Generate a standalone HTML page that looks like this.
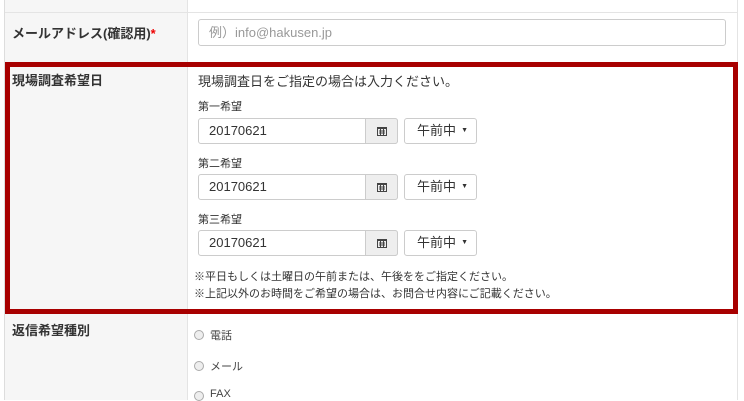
<!DOCTYPE html>
<html><head><meta charset="utf-8"><style>
*{box-sizing:border-box;margin:0;padding:0}
body{width:744px;height:400px;overflow:hidden;background:#fff;font-family:"Liberation Sans","Noto Sans CJK JP",sans-serif;color:#333;position:relative}
.a{position:absolute}
.lab{font-weight:bold;font-size:13px;color:#333}
.inp{position:absolute;border:1px solid #ccc;border-radius:3px;background:#fff;font-size:13px;padding-left:10px;line-height:24px}
.add{position:absolute;background:#eee;border:1px solid #ccc;border-radius:0 3px 3px 0}
.add svg{position:absolute;left:11px;top:7px}
.sel{position:absolute;border:1px solid #ccc;border-radius:3px;background:#fff;font-size:13px;line-height:24px;padding-left:12px}
.sm{font-size:11px;color:#333}
.rad{position:absolute;width:10px;height:10px;border:1px solid #aaa;border-radius:50%;background:#eee}
</style></head><body>
<div class="a" style="left:4px;top:0;width:1px;height:400px;background:#ddd"></div>
<div class="a" style="left:5px;top:0;width:182px;height:400px;background:#f6f6f6"></div>
<div class="a" style="left:187px;top:0;width:1px;height:400px;background:#e4e4e4"></div>
<div class="a" style="left:737px;top:0;width:1px;height:400px;background:#e4e4e4"></div>
<div class="a" style="left:5px;top:12px;width:733px;height:1px;background:#e4e4e4"></div>
<div class="a lab" style="left:12px;top:23px">メールアドレス(確認用)<span style="color:#e00">*</span></div>
<div class="inp" style="left:198px;top:19px;width:528px;height:27px;color:#999;line-height:25px">例）info@hakusen.jp</div>
<div class="a" style="left:5px;top:62px;width:733px;height:252px;border:5px solid #a80000"></div>
<div class="a lab" style="left:12px;top:70px">現場調査希望日</div>
<div class="a" style="left:198px;top:71px;font-size:13px">現場調査日をご指定の場合は入力ください。</div>

<div class="a sm" style="left:198px;top:98px">第一希望</div>
<div class="inp" style="left:198px;top:118px;width:200px;height:26px">20170621</div>
<div class="add" style="left:365px;top:118px;width:33px;height:26px"><svg width="10" height="10" viewBox="0 0 10 10"><rect x="0.5" y="1.5" width="9" height="8" fill="none" stroke="#444"/><rect x="0" y="1" width="10" height="2" fill="#444"/><path d="M2 5h6M2 7h6M3.5 3v6M6.5 3v6" stroke="#444" stroke-width="1"/></svg></div>
<div class="sel" style="left:404px;top:118px;width:73px;height:26px">午前中<span style="position:absolute;right:8px;font-size:7px">▼</span></div>

<div class="a sm" style="left:198px;top:155px">第二希望</div>
<div class="inp" style="left:198px;top:174px;width:200px;height:26px">20170621</div>
<div class="add" style="left:365px;top:174px;width:33px;height:26px"><svg width="10" height="10" viewBox="0 0 10 10"><rect x="0.5" y="1.5" width="9" height="8" fill="none" stroke="#444"/><rect x="0" y="1" width="10" height="2" fill="#444"/><path d="M2 5h6M2 7h6M3.5 3v6M6.5 3v6" stroke="#444" stroke-width="1"/></svg></div>
<div class="sel" style="left:404px;top:174px;width:73px;height:26px">午前中<span style="position:absolute;right:8px;font-size:7px">▼</span></div>

<div class="a sm" style="left:198px;top:211px">第三希望</div>
<div class="inp" style="left:198px;top:230px;width:200px;height:26px">20170621</div>
<div class="add" style="left:365px;top:230px;width:33px;height:26px"><svg width="10" height="10" viewBox="0 0 10 10"><rect x="0.5" y="1.5" width="9" height="8" fill="none" stroke="#444"/><rect x="0" y="1" width="10" height="2" fill="#444"/><path d="M2 5h6M2 7h6M3.5 3v6M6.5 3v6" stroke="#444" stroke-width="1"/></svg></div>
<div class="sel" style="left:404px;top:230px;width:73px;height:26px">午前中<span style="position:absolute;right:8px;font-size:7px">▼</span></div>

<div class="a sm" style="left:194px;top:268px">※平日もしくは土曜日の午前または、午後ををご指定ください。</div>
<div class="a sm" style="left:194px;top:285px">※上記以外のお時間をご希望の場合は、お問合せ内容にご記載ください。</div>

<div class="a lab" style="left:12px;top:320px">返信希望種別</div>
<div class="rad" style="left:194px;top:330px"></div><div class="a sm" style="left:210px;top:327px;color:#444">電話</div>
<div class="rad" style="left:194px;top:361px"></div><div class="a sm" style="left:210px;top:358px;color:#444">メール</div>
<div class="rad" style="left:194px;top:391px"></div><div class="a sm" style="left:210px;top:388px;color:#444">FAX</div>
</body></html>
